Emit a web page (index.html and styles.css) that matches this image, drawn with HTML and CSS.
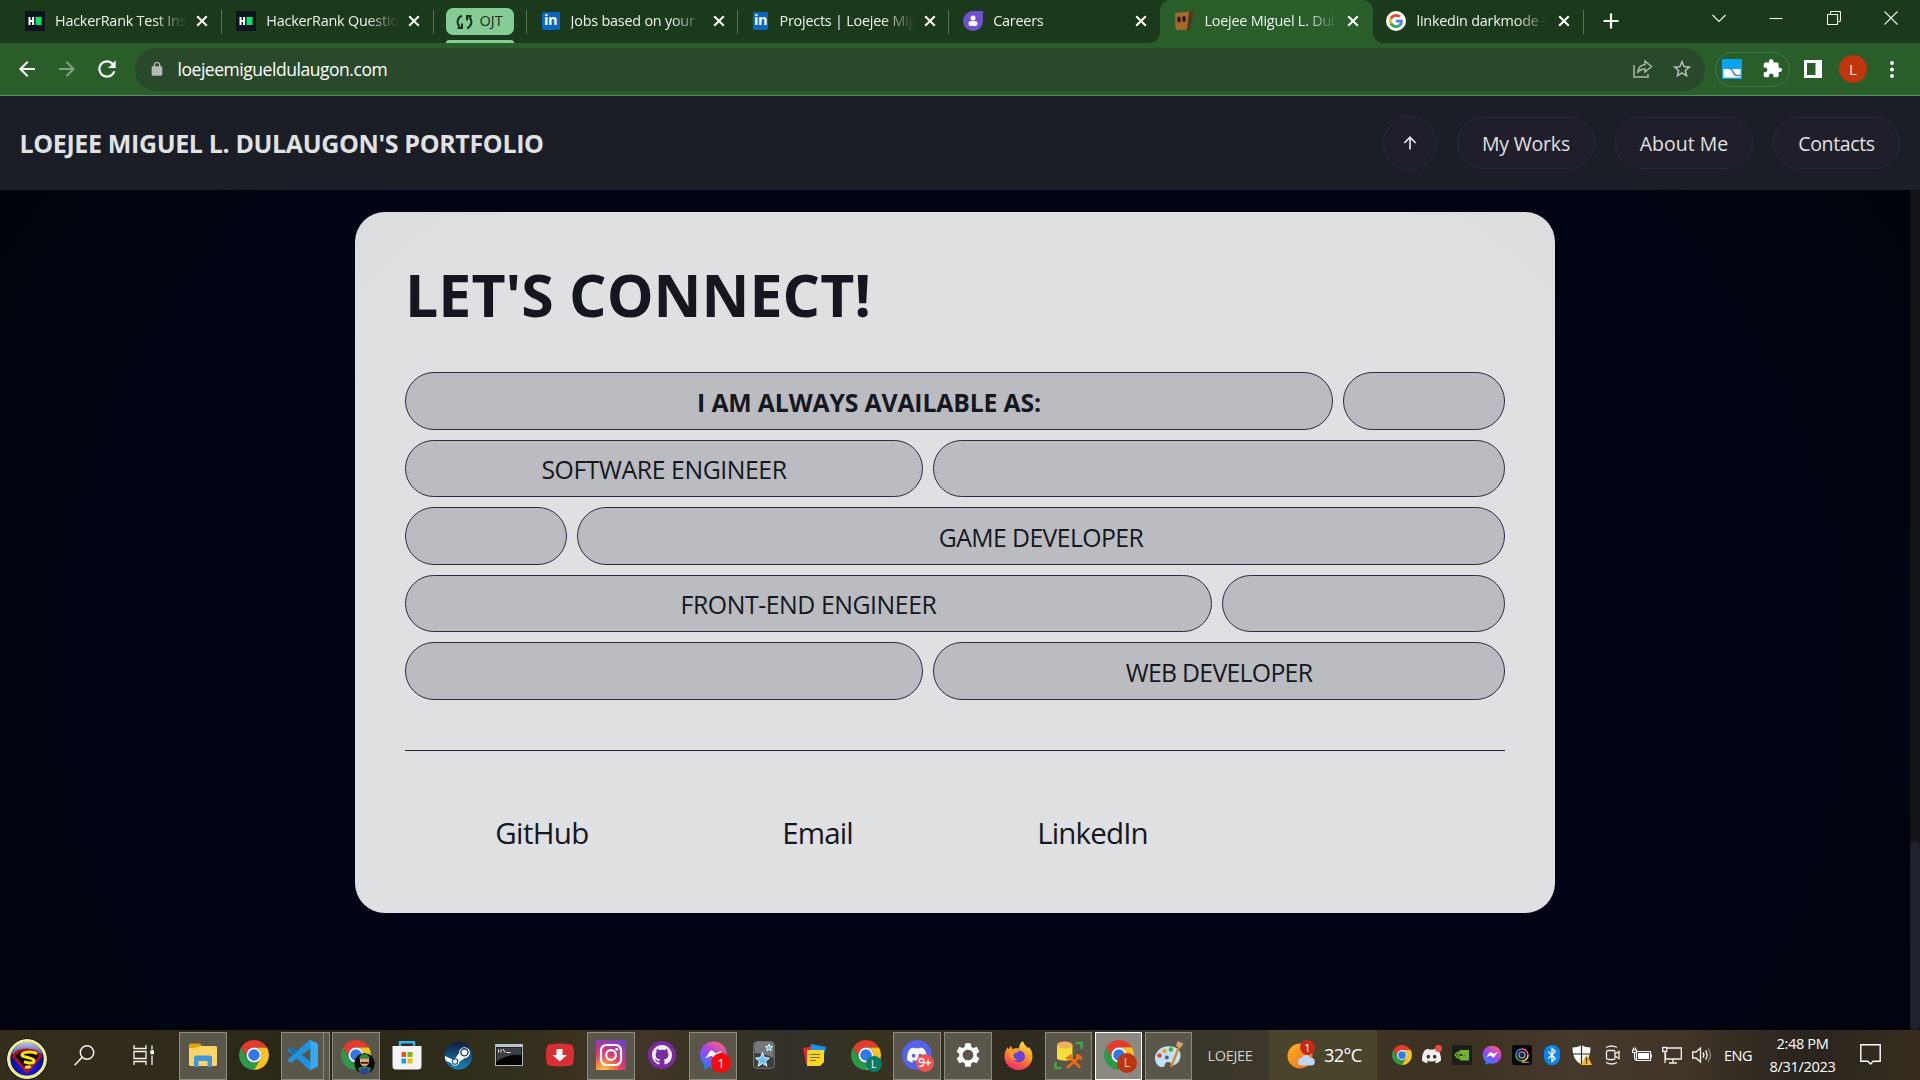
FILE: index.html
```html
<!DOCTYPE html>
<html lang="en">
<head>
<meta charset="utf-8">
<title>Loejee Miguel L. Dulaugon's Portfolio</title>
<link rel="stylesheet" href="styles.css">
</head>
<body>
<svg class="defs" width="0" height="0">
  <symbol id="chrome" viewBox="0 0 48 48">
    <path fill="#e33b2e" d="M24 12h20.78A24 24 0 0 0 3.22 12L13.6 30A12 12 0 0 1 24 12z"/>
    <path fill="#2b9a48" d="M34.4 30L24 48A24 24 0 0 1 3.22 12L13.6 30A12 12 0 0 0 34.4 30z"/>
    <path fill="#fcc31e" d="M34.4 30L24 48A24 24 0 0 0 44.78 12H24A12 12 0 0 1 34.4 30z"/>
    <circle cx="24" cy="24" r="12" fill="#fff"/><circle cx="24" cy="24" r="9.3" fill="#2f78e8"/>
  </symbol>
  <symbol id="close" viewBox="0 0 12 12"><path d="M1.2 1.2l9.6 9.6M10.8 1.2L1.2 10.8" stroke="#fff" stroke-width="2" fill="none"/></symbol>
  <symbol id="hr" viewBox="0 0 20 20"><path fill="#0e141e" d="M0 0h20v20H0z"/><path fill="#fff" d="M3.5 6h2v3h1.6V6h2v8h-2v-3H5.500v3h-2z"/><path fill="#05e866" d="M10.500 6h6v8h-6z"/></symbol>
  <symbol id="discord" viewBox="0 0 24 24"><path d="M20.317 4.3698a19.7913 19.7913 0 00-4.8851-1.5152.0741.0741 0 00-.0785.0371c-.211.3753-.4447.8648-.6083 1.2495-1.8447-.2762-3.68-.2762-5.4868 0-.1636-.3933-.4058-.8742-.6177-1.2495a.077.077 0 00-.0785-.037 19.7363 19.7363 0 00-4.8852 1.515.0699.0699 0 00-.0321.0277C.5334 9.0458-.319 13.5799.0992 18.0578a.0824.0824 0 00.0312.0561c2.0528 1.5076 4.0413 2.4228 5.9929 3.0294a.0777.0777 0 00.0842-.0276c.4616-.6304.8731-1.2952 1.226-1.9942a.076.076 0 00-.0416-.1057c-.6528-.2476-1.2743-.5495-1.8722-.8923a.077.077 0 01-.0076-.1277c.1258-.0943.2517-.1923.3718-.2914a.0743.0743 0 01.0776-.0105c3.9278 1.7933 8.18 1.7933 12.0614 0a.0739.0739 0 01.0785.0095c.1202.099.246.1981.3728.2924a.077.077 0 01-.0066.1276 12.2986 12.2986 0 01-1.873.8914.0766.0766 0 00-.0407.1067c.3604.698.7719 1.3628 1.225 1.9932a.076.076 0 00.0842.0286c1.961-.6067 3.9495-1.5219 6.0023-3.0294a.077.077 0 00.0313-.0552c.5004-5.177-.8382-9.6739-3.5485-13.6604a.061.061 0 00-.0312-.0286zM8.02 15.3312c-1.1825 0-2.1569-1.0857-2.1569-2.419 0-1.3332.9555-2.4189 2.157-2.4189 1.2108 0 2.1757 1.0952 2.1568 2.419 0 1.3332-.9555 2.4189-2.1569 2.4189zm7.9748 0c-1.1825 0-2.1569-1.0857-2.1569-2.419 0-1.3332.9554-2.4189 2.1569-2.4189 1.2108 0 2.1757 1.0952 2.1568 2.419 0 1.3332-.946 2.4189-2.1568 2.4189Z"/></symbol>
  <linearGradient id="msg" x1="0.2" y1="1" x2="0.8" y2="0"><stop offset="0" stop-color="#1a86ff"/><stop offset=".5" stop-color="#a043f5"/><stop offset="1" stop-color="#ff6470"/></linearGradient>
  <symbol id="messenger" viewBox="0 0 30 30"><path fill="url(#msg)" d="M15 1C7 1 1 6.800 1 14.500c0 4 1.700 7.500 4.500 9.900V30l4.800-2.600c1.500.4 3 .6 4.700.6 8 0 14-5.800 14-13.500S23 1 15 1z"/><path fill="#fff" d="M6.500 18.500l4.600-7.200c.7-1 2-1.200 3-.5l3.200 2.500 6.200-2.800-4.600 7.200c-.7 1-2 1.200-3 .5l-3.200-2.500z"/></symbol>
</svg>

<header class="tabstrip">
  <div class="tab hrk"><svg class="fav" width="20" height="20"><use href="#hr"/></svg><span class="label">HackerRank Test Ins</span><svg class="x" width="12" height="12"><use href="#close"/></svg></div>
  <div class="tab hrk"><svg class="fav" width="20" height="20"><use href="#hr"/></svg><span class="label">HackerRank Questio</span><svg class="x" width="12" height="12"><use href="#close"/></svg></div>
  <div class="group"><div class="chip"><svg width="17" height="16" viewBox="0 0 17 16" fill="none" stroke="#17301a" stroke-width="2"><path d="M6 1.800A6.500 6.500 0 0 0 4 13M1.500 14H6V9.500M11 14.200A6.500 6.500 0 0 0 13 3M15.500 2H11v4.500"/></svg><span>OJT</span></div></div>
  <div class="tab li"><span class="fav in">in</span><span class="label">Jobs based on your</span><svg class="x" width="12" height="12"><use href="#close"/></svg></div>
  <div class="tab li"><span class="fav in">in</span><span class="label">Projects | Loejee Mig</span><svg class="x" width="12" height="12"><use href="#close"/></svg></div>
  <div class="tab nosep"><svg class="fav" width="20" height="20" viewBox="0 0 20 20"><path fill="#7150cf" d="M10 0h10v10A10 10 0 1 1 10 0z"/><circle cx="10" cy="7" r="2.500" fill="#fff"/><rect x="5.500" y="10" width="9" height="5" rx="2.500" fill="#fff"/></svg><span class="label">Careers</span><svg class="x" width="12" height="12"><use href="#close"/></svg></div>
  <div class="tab nosep active"><svg class="fav" width="20" height="20" viewBox="0 0 20 20"><path fill="#54341e" d="M14 2l5-2v6l-4 13-2 0z"/><path fill="#a5682d" d="M1 2l14-1.500L13 19l-2 .5-1-1.500-1.500 2L6 18l-1.500 1.500L1.500 18z"/><ellipse cx="5" cy="8.500" rx="1.700" ry="3" fill="#2a1a10"/><ellipse cx="10" cy="8" rx="1.700" ry="3" fill="#2a1a10"/></svg><span class="label">Loejee Miguel L. Dul</span><svg class="x" width="12" height="12"><use href="#close"/></svg></div>
  <div class="tab google"><svg class="fav" width="20" height="20" viewBox="0 0 68 68"><circle cx="34" cy="34" r="34" fill="#fff"/><g transform="translate(10 10)"><path fill="#ea4335" d="M24 9.500c3.540 0 6.710 1.220 9.210 3.600l6.850-6.850C35.900 2.380 30.470 0 24 0 14.620 0 6.510 5.380 2.560 13.220l7.980 6.190C12.430 13.720 17.740 9.500 24 9.500z"/><path fill="#4285f4" d="M46.980 24.550c0-1.570-.15-3.090-.38-4.550H24v9.020h12.940c-.58 2.960-2.260 5.480-4.780 7.180l7.730 6c4.510-4.180 7.090-10.360 7.090-17.650z"/><path fill="#fbbc05" d="M10.530 28.590c-.48-1.450-.76-2.990-.76-4.590s.27-3.140.76-4.590l-7.980-6.190C.92 16.460 0 20.120 0 24c0 3.880.92 7.540 2.560 10.780l7.970-6.190z"/><path fill="#34a853" d="M24 48c6.480 0 11.930-2.130 15.890-5.810l-7.730-6c-2.150 1.450-4.920 2.300-8.160 2.300-6.260 0-11.570-4.220-13.470-9.910l-7.980 6.190C6.510 42.620 14.620 48 24 48z"/></g></svg><span class="label">linkedin darkmode -</span><svg class="x" width="12" height="12"><use href="#close"/></svg></div>
  <svg class="plus" width="16" height="16" viewBox="0 0 16 16"><path d="M8 .5v15M.5 8h15" stroke="#fff" stroke-width="2.200"/></svg>
  <div class="winctl">
    <svg width="14" height="14" viewBox="0 0 14 14"><path d="M.5 4L7 10.500 13.500 4"/></svg>
    <svg width="14" height="14" viewBox="0 0 14 14"><path d="M.5 7.500h13"/></svg>
    <svg width="14" height="14" viewBox="0 0 14 14"><path d="M.5 3.500h10v10H.5zM3.500 3.500v-2q0-1 1-1h8q1 0 1 1v8q0 1-1 1h-2"/></svg>
    <svg width="14" height="14" viewBox="0 0 14 14"><path d="M.5.500l13 13M13.500.500l-13 13"/></svg>
  </div>
</header>

<nav class="toolbar">
  <div class="navbtns">
    <svg width="24" height="24" viewBox="0 0 24 24" fill="#fff"><path d="M20 11H7.830l5.590-5.590L12 4l-8 8 8 8 1.410-1.410L7.830 13H20z"/></svg>
    <svg width="24" height="24" viewBox="0 0 24 24" fill="#82a184"><path d="M4 11h12.170l-5.590-5.590L12 4l8 8-8 8-1.410-1.410L16.170 13H4z"/></svg>
    <svg width="26" height="26" viewBox="0 0 24 24" fill="#fff"><path d="M17.650 6.350C16.200 4.900 14.210 4 12 4c-4.420 0-7.990 3.580-7.990 8s3.570 8 7.990 8c3.730 0 6.840-2.550 7.730-6h-2.080c-.82 2.330-3.040 4-5.650 4-3.310 0-6-2.690-6-6s2.690-6 6-6c1.660 0 3.140.69 4.220 1.780L13 11h7V4l-2.350 2.350z"/></svg>
  </div>
  <div class="omnibox">
    <svg width="16" height="16" viewBox="0 0 24 24" fill="#b4bab6"><path d="M18 8h-1V6c0-2.760-2.240-5-5-5S7 3.240 7 6v2H6c-1.100 0-2 .9-2 2v10c0 1.100.9 2 2 2h12c1.100 0 2-.9 2-2V10c0-1.100-.9-2-2-2zM9 6c0-1.660 1.340-3 3-3s3 1.340 3 3v2H9V6z"/></svg>
    <span class="url">loejeemigueldulaugon.com</span>
    <svg width="20" height="18" viewBox="0 0 20 18" fill="none" stroke="#aab9ab" stroke-width="1.500"><path d="M1 5v12h14v-3M12 1l6.500 5.500L12 12V9C8.500 9 6 10.300 4.500 13 5 8 7.500 5 12 4.500z"/></svg>
    <svg class="star" width="22" height="22" viewBox="0 0 24 24" fill="#b9c4ba"><path d="M22 9.240l-7.190-.62L12 2 9.190 8.630 2 9.240l5.460 4.730L5.820 21 12 17.270 18.180 21l-1.630-7.030L22 9.240zM12 15.400l-3.760 2.270 1-4.280-3.320-2.880 4.380-.38L12 6.100l1.710 4.040 4.380.38-3.320 2.880 1 4.280L12 15.400z"/></svg>
  </div>
  <div class="extpill">
    <svg width="20" height="20" viewBox="0 0 20 20"><rect x=".7" y=".7" width="18.600" height="18.600" fill="#fff" stroke="#0aa0ea" stroke-width="1.400"/><path fill="#04a5f0" d="M0 0h20v10H0z"/><path d="M8 10c4 0 2 6.500 7 6.500h4" fill="none" stroke="#4c87b8" stroke-width="1.600"/></svg>
    <svg width="21" height="21" viewBox="0 0 24 24" fill="#fff"><path d="M20.500 11H19V7c0-1.100-.9-2-2-2h-4V3.500C13 2.120 11.880 1 10.500 1S8 2.120 8 3.500V5H4c-1.100 0-1.990.9-1.990 2v3.800H3.500c1.490 0 2.700 1.210 2.700 2.700s-1.210 2.700-2.700 2.700H2V20c0 1.100.9 2 2 2h3.800v-1.500c0-1.490 1.210-2.700 2.700-2.700 1.490 0 2.700 1.210 2.700 2.700V22H17c1.100 0 2-.9 2-2v-4h1.500c1.380 0 2.500-1.120 2.500-2.500S21.880 11 20.500 11z"/></svg>
  </div>
  <svg class="panel" width="18" height="18" viewBox="0 0 18 18"><path fill="#fff" fill-rule="evenodd" d="M0 0h18v18H0zM3 3v12h8.500V3z"/></svg>
  <span class="avatar">L</span>
  <svg class="dots" width="4" height="17" viewBox="0 0 4 17" fill="#fff"><circle cx="2" cy="2" r="1.900"/><circle cx="2" cy="8.500" r="1.900"/><circle cx="2" cy="15" r="1.900"/></svg>
</nav>

<section class="sitehead">
  <h2 class="brand">LOEJEE MIGUEL L. DULAUGON'S PORTFOLIO</h2>
  <div class="menu">
    <a class="up"><svg width="14" height="14" viewBox="0 0 14 14" fill="none" stroke="#e1e3e6" stroke-width="1.700"><path d="M7 13.500V1.500M1.300 7L7 1.300 12.700 7"/></svg></a>
    <a class="works">My Works</a><a class="about">About Me</a><a class="contacts">Contacts</a>
  </div>
</section>

<main class="page">
  <article class="card">
    <h1>LET'S CONNECT!</h1>
    <div class="rows">
      <div class="row r1"><b>I AM ALWAYS AVAILABLE AS:</b><span></span></div>
      <div class="row r2"><span>SOFTWARE ENGINEER</span><span></span></div>
      <div class="row r3"><span></span><span class="game">GAME DEVELOPER</span></div>
      <div class="row r4"><span>FRONT-END ENGINEER</span><span></span></div>
      <div class="row r2"><span></span><span class="web">WEB DEVELOPER</span></div>
    </div>
    <hr>
    <div class="links"><a class="gh">GitHub</a><a>Email</a><a>LinkedIn</a></div>
  </article>
  <div class="scroll"><i></i></div>
</main>

<footer class="taskbar">
  <div class="start"><svg width="42" height="42" viewBox="0 0 42 42"><defs><radialGradient id="sb" cx=".5" cy=".7" r=".6"><stop offset="0" stop-color="#1a22ff"/><stop offset="1" stop-color="#050a70"/></radialGradient><linearGradient id="sg" x1="0" y1="0" x2="0" y2="1"><stop offset="0" stop-color="#c4c8ea"/><stop offset=".6" stop-color="#7886c8"/><stop offset="1" stop-color="#4a55a8"/></linearGradient></defs><circle cx="21" cy="21" r="20.500" fill="#0a0a0a"/><circle cx="21" cy="21" r="18" fill="url(#sb)" stroke="#f2ef62" stroke-width="2.600"/><circle cx="21" cy="21" r="19.400" fill="none" stroke="#fffff0" stroke-width="1"/><path fill="url(#sg)" d="M5 16C8 8 14 4 21 4s13 4 16 12z"/><path fill="#b3121c" d="M11 12.500q10-4 20 0l5.500 5.500L21 36 5.500 18z"/><path fill="#120808" d="M13 14.500q8-3 17 0l3 3.500-12 14L9 18z"/><path d="M31 15.500c-5-2-14-2-15 1-.8 3.400 12 2.500 12 6.200 0 3-5 3-10 1M19 29c3 .8 4 .2 5.500-1" fill="none" stroke="#ffe51c" stroke-width="3"/></svg></div>
  <div class="glyph search"><svg width="21" height="21" viewBox="0 0 21 21" fill="none" stroke="#f5f5f2" stroke-width="1.500"><circle cx="13" cy="7.500" r="6.700"/><path d="M8.200 12.300L.6 20.200"/></svg></div>
  <div class="glyph view"><svg width="21" height="20" viewBox="0 0 21 20" fill="none" stroke="#f5f5f2" stroke-width="1.300"><path d="M1 0v3.500h12V0M1 20v-3.500h12V20M1 6.500h12v7H1zM19 .5v4M19 10.500V20"/><path fill="#fff" d="M18 6h2.500v2.500H18z"/></svg></div>

  <div class="slot open"><svg width="28" height="24" viewBox="0 0 28 24"><path fill="#e3a008" d="M0 2q0-1.500 1.500-1.500h9.500l2 2.500v6H0z"/><path fill="#fed565" d="M0 5q8 0 11-2h15.500q1.500 0 1.500 1.500v17q0 1.500-1.500 1.500h-25Q0 23 0 21.500z"/><path fill="#3f96dc" d="M5 24V14.500q0-2 2-2h14q2 0 2 2V24h-4.500v-6h-9v6z"/></svg></div>
  <div class="slot"><svg width="30" height="30"><use href="#chrome"/></svg></div>
  <div class="slot open stacked"><svg width="30" height="30" viewBox="0 0 24 24"><path fill="#1f93dd" d="M23.150 2.587L18.210.21a1.494 1.494 0 0 0-1.705.29l-9.460 8.630-4.120-3.128a.999.999 0 0 0-1.276.057L.327 7.261A1 1 0 0 0 .326 8.740L3.899 12 .326 15.260a1 1 0 0 0 .001 1.479L1.650 17.940a.999.999 0 0 0 1.276.057l4.120-3.128 9.460 8.630a1.492 1.492 0 0 0 1.704.29l4.942-2.377A1.500 1.500 0 0 0 24 20.060V3.939a1.500 1.500 0 0 0-.85-1.352zm-5.146 14.861L10.826 12l7.178-5.448v10.896z"/><path fill="#36a9f0" d="M18 .1l5.150 2.487A1.500 1.500 0 0 1 24 3.939V20.060a1.500 1.500 0 0 1-.85 1.350L18 23.900z"/><path fill="#0b75bc" d="M.33 7.260L1.650 6.060a1 1 0 0 1 1.270-.06L7 9.100l-3.100 2.900z"/></svg></div>
  <div class="slot open"><svg width="30" height="30"><use href="#chrome"/></svg><svg class="badge luigi" width="21" height="21" viewBox="0 0 21 21"><circle cx="10.500" cy="10.500" r="10.500" fill="#0b0d0c"/><path fill="#2f8a3a" d="M5 5.500Q6 1 10.500 1T16 5.500z"/><path fill="#e0a483" d="M6 5.500h9v5q-2 3-4.500 3T6 10.500z"/><path fill="#3a2015" d="M6.500 9h8v1.800h-8z"/><path fill="#2f8a3a" d="M4 15q6-3 13 0l-1.500 4h-10z"/><path fill="#2b479e" d="M7 15h7l1.500 5q-5 1-10 0z"/></svg></div>
  <div class="slot"><svg width="30" height="30" viewBox="0 0 30 30"><path d="M8 8V2.200h14V8" fill="none" stroke="#34b4f0" stroke-width="2.400"/><path fill="#f4f4f4" d="M.5 6h29v20q0 3.500-3.500 3.500H4Q.5 29.500.5 26z"/><path fill="#f25022" d="M9.500 12H14v5H9.500z"/><path fill="#7fba00" d="M15.500 12h5v5h-5z"/><path fill="#00a4ef" d="M9.500 18.500H14v5H9.500z"/><path fill="#ffb900" d="M15.500 18.500h5v5h-5z"/></svg></div>
  <div class="slot"><svg width="29" height="29" viewBox="0 0 29 29"><defs><linearGradient id="st" x1="0" y1="0" x2="0" y2="1"><stop offset="0" stop-color="#101a3c"/><stop offset="1" stop-color="#1a84ba"/></linearGradient></defs><circle cx="14.500" cy="14.500" r="14" fill="url(#st)"/><path fill="#fff" d="M.8 15l8 3.400 2.200-.7 4-5.700a5.500 5.500 0 1 1 5.500 5.200L15.300 21a4.200 4.200 0 0 1-8 1.200L1.500 19.500z"/><circle cx="20.400" cy="11.300" r="3.600" fill="#fff" stroke="#1c3c68" stroke-width="1.400"/><circle cx="11" cy="20.600" r="2.700" fill="none" stroke="#1c5c90" stroke-width="1.200"/></svg></div>
  <div class="slot"><svg width="28" height="22" viewBox="0 0 28 22"><rect x=".5" y=".5" width="27" height="21" fill="#050505" stroke="#a9b8bf"/><path fill="#b9c6cc" d="M1 0h26v3H1z"/><path fill="#3d4042" d="M1.500 3.500h25V11C16 10 8 13 1.500 18z"/><path d="M3.500 5.500v3M6 5.500v3M8 5l2 3.500M11.500 8.500h4" stroke="#e8e8e8" stroke-width="1"/></svg></div>
  <div class="slot"><svg width="28" height="24" viewBox="0 0 28 24"><path fill="#d92f34" d="M3 1.500Q14-.5 25 1.500 28 2 28 12t-3 10.500q-11 2-22 0Q0 22 0 12T3 1.500z"/><path fill="#fff" d="M10.500 6h6v6h4.500L13.700 18.500 6.500 12h4z"/></svg></div>
  <div class="slot open"><svg width="30" height="30" viewBox="0 0 30 30"><defs><radialGradient id="ig" cx=".25" cy="1.050" r="1.150"><stop offset="0" stop-color="#ffd060"/><stop offset=".25" stop-color="#fb8a3c"/><stop offset=".55" stop-color="#df3670"/><stop offset="1" stop-color="#7440c8"/></radialGradient></defs><path fill="url(#ig)" d="M0 0h30v30H0z"/><g fill="none" stroke="#fff" stroke-width="2.200"><rect x="5" y="5" width="20" height="20" rx="5.500"/><circle cx="15" cy="15" r="4.900"/></g><circle cx="20.700" cy="9.300" r="1.400" fill="#fff"/></svg></div>
  <div class="slot"><svg width="28" height="28" viewBox="0 0 28 28"><circle cx="14" cy="14" r="14" fill="#7a2ba0"/><path transform="translate(4 4) scale(1.250)" fill="#f5effa" d="M8 0C3.580 0 0 3.580 0 8c0 3.540 2.290 6.530 5.470 7.590.4.070.55-.17.55-.38 0-.19-.01-.82-.01-1.490-2.010.37-2.530-.49-2.690-.94-.09-.23-.48-.94-.82-1.130-.28-.15-.68-.52-.01-.53.63-.01 1.080.58 1.230.82.72 1.210 1.870.87 2.330.66.070-.52.280-.87.510-1.070-1.780-.2-3.640-.89-3.640-3.950 0-.87.310-1.590.82-2.150-.08-.2-.36-1.020.08-2.120 0 0 .67-.21 2.200.82.640-.18 1.320-.27 2-.27s1.360.09 2 .27c1.530-1.040 2.200-.82 2.200-.82.440 1.100.160 1.920.080 2.120.510.560.820 1.270.820 2.150 0 3.070-1.870 3.750-3.650 3.950.290.250.540.730.540 1.480 0 1.070-.01 1.930-.01 2.200 0 .21.150.46.550.38A8.010 8.010 0 0 0 16 8c0-4.420-3.580-8-8-8z"/></svg></div>
  <div class="slot open"><svg width="29" height="30"><use href="#messenger"/></svg><span class="badge one">1</span></div>
  <div class="slot"><svg width="22" height="28" viewBox="0 0 22 28"><rect x=".7" y=".7" width="20.600" height="26.600" rx="3" fill="#3b3d3e" stroke="#77797a"/><path fill="#767879" d="M1.500 4q0-3 3-3h13q3 0 3 3v13Q12 12 1.500 12z"/><path fill="#6ebdf0" stroke="#e6f5ff" stroke-width="1" d="M9.500 11.500l2 5 5 .6-3.900 3.200 1.300 4.900-4.400-2.700-4.400 2.700 1.300-4.900-3.900-3.200 5-.6zM16 3l1 2.400 2.500.2-1.900 1.600.6 2.500L16 8.400l-2.200 1.300.6-2.500-1.900-1.600 2.500-.2z"/></svg></div>
  <div class="slot"><svg width="24" height="24" viewBox="0 0 24 24"><path fill="#e5262c" d="M0 5l14-3 4 16L3 21z"/><path fill="#1593f2" d="M8 1l15 3-4 17H6z"/><path fill="#fcd620" d="M4 7h17v12l-4 4H4z"/><path d="M7 11.500h10M7 14.500h10M7 17.500h6" stroke="#7c6a10" stroke-width="1.200"/></svg></div>
  <div class="slot"><svg width="30" height="30"><use href="#chrome"/></svg><span class="badge teal">L</span></div>
  <div class="slot open"><svg width="30" height="30" viewBox="0 0 30 30"><circle cx="15" cy="15" r="15" fill="#5562ea"/><svg x="5" y="5" width="20" height="20" viewBox="0 0 24 24" fill="#fff"><use href="#discord"/></svg></svg><span class="badge nine">9+</span></div>
  <div class="slot open"><svg width="28" height="28" viewBox="0 0 24 24" fill="#fff"><path d="M19.430 12.980c.04-.32.07-.64.07-.98s-.03-.66-.07-.98l2.110-1.650c.19-.15.24-.42.12-.64l-2-3.460c-.12-.22-.39-.3-.61-.22l-2.490 1c-.52-.4-1.080-.73-1.690-.98l-.38-2.650C14.460 2.180 14.250 2 14 2h-4c-.25 0-.46.18-.49.42l-.38 2.650c-.61.25-1.170.59-1.690.98l-2.490-1c-.23-.09-.49 0-.61.22l-2 3.460c-.13.22-.07.49.12.64l2.110 1.650c-.04.32-.07.65-.07.98s.03.66.07.98l-2.110 1.650c-.19.15-.24.42-.12.64l2 3.460c.12.22.39.3.61.22l2.490-1c.52.4 1.080.73 1.690.98l.38 2.650c.03.24.24.42.49.42h4c.25 0 .46-.18.49-.42l.38-2.650c.61-.25 1.170-.59 1.690-.98l2.490 1c.23.09.49 0 .61-.22l2-3.460c.12-.22.07-.49-.12-.64l-2.110-1.650zM12 16.600c-2.540 0-4.600-2.060-4.600-4.600s2.060-4.600 4.600-4.600 4.600 2.060 4.600 4.600-2.060 4.600-4.600 4.600z"/></svg></div>
  <div class="slot narrow"><svg width="29" height="29" viewBox="0 0 29 29"><defs><linearGradient id="ff" x1=".7" y1="0" x2=".3" y2="1"><stop offset="0" stop-color="#ffe63a"/><stop offset=".5" stop-color="#ff8a26"/><stop offset="1" stop-color="#f5246a"/></linearGradient></defs><path fill="url(#ff)" d="M14.500 29C6.500 29 .5 23 .5 15.500c0-4 1.500-7.500 3.500-9.500l.5 2.500L7 4.500l1 3.500c3-1 5-1 7-.5 0-3 1-5.500 4-7.500.5 3 3 5 5 7l1-1c2.500 3 3.500 6 3.500 9.500C28.500 23 22.500 29 14.500 29z"/><circle cx="15" cy="15.500" r="6" fill="#6a43d6"/><path fill="#ff9a2a" d="M5 10c4-2.500 8-2 10 1-3 0-4 1.500-6 2.500 0 3 2 5 5 5-5 2-9-1-9-8.500z"/></svg></div>
  <div class="slot open narrow"><svg width="29" height="29" viewBox="0 0 29 29"><path d="M21.500 2h6v6M7.500 27h-6v-6" fill="none" stroke="#46a342" stroke-width="2.600"/><path fill="#f7dd38" d="M3 4v14q8 3.500 15.500 0V4z"/><ellipse cx="10.700" cy="4" rx="7.800" ry="3.500" fill="#eeb25a"/><path d="M13 27l12-11M15 15.500l11 11M12.500 18l5-4M22 14.500q4 0 5.500 4" stroke="#ec6c0c" stroke-width="2.800" fill="none"/></svg></div>
  <div class="slot open narrow current"><svg width="30" height="30"><use href="#chrome"/></svg><span class="badge red">L</span></div>
  <div class="slot open narrow"><svg width="30" height="28" viewBox="0 0 30 28"><path fill="#bfe3f5" d="M12 5.500C5 6.500 1 12 1 17c0 6 4 9.500 8 9 3-.5 1-4.500 4.500-5 4-.5 4 4 7 3 4-1.500 6.500-6 6-11-.5-5-6-8.500-14.500-7.500z"/><circle cx="5.500" cy="14.500" r="2.300" fill="#e6423c"/><circle cx="10.500" cy="10" r="2.300" fill="#f2a41c"/><circle cx="17" cy="8.500" r="2.200" fill="#44ac45"/><circle cx="12.800" cy="16.500" r="1.900" fill="#45616e"/><path d="M25.500 5L17 26" stroke="#e2832a" stroke-width="2.300"/><path fill="#d3a271" d="M22 5l1.500-5 6 2.500-3 4.500z"/></svg></div>

  <div class="desk">LOEJEE</div>
  <div class="weather"><svg width="29" height="29" viewBox="0 0 29 29"><defs><linearGradient id="sun" x1="0" y1="0" x2="1" y2="1"><stop offset="0" stop-color="#fbb325"/><stop offset="1" stop-color="#f06d15"/></linearGradient></defs><circle cx="13" cy="15" r="12.500" fill="url(#sun)"/><path fill="#bcd5f8" d="M14 24.500a3.800 3.800 0 0 1 .5-7.500 5 5 0 0 1 9-.3 4 4 0 0 1 1.500 7.800z"/></svg><span class="badge alert">1</span><span class="temp">32°C</span></div>

  <div class="tray">
    <svg width="20" height="20"><use href="#chrome"/></svg>
    <svg width="20" height="20" viewBox="0 0 20 20"><svg x="0" y="1.500" width="19" height="19" viewBox="0 0 24 24" fill="#f0f0f0"><use href="#discord"/></svg><circle cx="16.500" cy="3.500" r="3.500" fill="#f0484a"/></svg>
    <svg width="20" height="20" viewBox="0 0 20 20"><path fill="#1b1e1d" d="M0 0h20v20H0z"/><path fill="#74b62e" d="M8 5h9v10.500H8z"/><path fill="#1b1e1d" d="M8 7c3 0 5 1 6.500 3-1.500 2-3.500 3.500-6.500 3.500z"/><path d="M3 10q5-6.500 11.500 0Q8 16.500 3 10zM6 10q3-3.500 6 0-3 3.500-6 0z" fill="none" stroke="#74b62e" stroke-width="1.300"/></svg>
    <svg width="20" height="20"><use href="#messenger"/></svg>
    <svg width="20" height="20" viewBox="0 0 20 20"><rect width="20" height="20" rx="3" fill="#050505"/><g fill="none" stroke-width="1.600"><path stroke="#f2559c" d="M10 4a6 6 0 0 1 6 6"/><path stroke="#f0d04a" d="M16 10a6 6 0 0 1-6 6"/><path stroke="#40b65c" d="M10 16a6 6 0 0 1-6-6"/><path stroke="#4a86f0" d="M4 10a6 6 0 0 1 6-6"/></g><circle cx="10" cy="10" r="3.800" fill="#8f96c4"/><circle cx="10" cy="10" r="2.400" fill="#20243c"/><path d="M10 17.300h7" stroke="#ddd" stroke-width=".8"/></svg>
    <svg width="20" height="20" viewBox="0 0 20 20"><rect x="2" width="16" height="20" rx="7.500" fill="#0a84f5"/><path d="M6.300 6.500l7 7L10 16.500v-13l3.300 3-7 7" fill="none" stroke="#fff" stroke-width="1.300"/></svg>
    <svg width="20" height="20" viewBox="0 0 20 20"><path fill="#fff" d="M9.500 0Q13 2.500 18.500 2.500 19 15 9.500 19.500 0 15 .5 2.500 6 2.500 9.500 0z"/><path d="M9.500 0v19M0 9h19" stroke="#2a2418" stroke-width="1.200"/><path fill="#fdb913" d="M14.500 9L20 20H9z"/><path d="M14.500 12.500v4M14.500 17.500v1.200" stroke="#222" stroke-width="1.300"/></svg>
    <svg width="20" height="20" viewBox="0 0 20 20" fill="none" stroke="#eee" stroke-width="1.300"><rect x="4.500" y="5.500" width="8.500" height="9" rx="1.500"/><path d="M13 9l4-2.500v7L13 11M4 2.500Q9.500-.5 15 2.500M4 17.500q5.500 3 11 0"/></svg>
    <svg width="20" height="20" viewBox="0 0 20 20"><path d="M4.500 6.500h14v9h-14zM19.500 9.500v3M2.500 7v5q0 3 2 3M.5 5h4v2.500h-4zM1.500 2.500V5M3.500 2.500V5" fill="none" stroke="#f2f2f2" stroke-width="1.200"/><path fill="#fff" d="M6 8h11v6H6z"/></svg>
    <svg width="20" height="20" viewBox="0 0 20 20" fill="none" stroke="#f0f0f0" stroke-width="1.300"><path d="M5 3h14.300v11H3.500V8M11 14v4M7 18h8M.7 2.500h4V6.500h-4zM3 6.500V18"/></svg>
    <svg width="20" height="20" viewBox="0 0 20 20" fill="none" stroke="#f2f2f2" stroke-width="1.300"><path d="M.7 7H4l4.500-4v14L4 13H.7z"/><path d="M11 7.500q1.800 2.500 0 5M13.500 5.500q3.200 4.500 0 9"/><path stroke="#8b857a" d="M16 3.500q5 6.500 0 13"/></svg>
  </div>
  <div class="lang">ENG</div>
  <div class="clock"><span>2:48 PM</span><span>8/31/2023</span></div>
  <svg class="note" width="21" height="21" viewBox="0 0 21 21" fill="none" stroke="#fff" stroke-width="1.400"><path d="M.8.800h19.400v16.500h-7L10.500 20l-2.700-2.700h-7z"/></svg>
</footer>
</body>
</html>
```
FILE: styles.css
```css
* { box-sizing: border-box; }
html, body { margin: 0; width: 1920px; height: 1080px; overflow: hidden; }
body { font-family: "Open Sans", "Noto Sans", sans-serif; display: flex; flex-direction: column; background: #010414; }
.defs { position: absolute; }
svg { flex: none; display: block; }
h1, h2 { margin: 0; }

/* tab strip */
.tabstrip { height: 43px; background: #1b391b; display: flex; padding-left: 11px; flex: none; }
.tab { width: 211.3px; flex: none; display: flex; align-items: center; padding: 0 14px 1px; position: relative; }
.tab::after { content: ""; position: absolute; right: 0; top: 10px; width: 1px; height: 24px; background: #587459; }
.tab.nosep::after { display: none; }
.tab.hrk { padding-right: 15px; }
.tab.li { padding-left: 15px; }
.fav { margin-right: 10px; }
.li .fav { margin-right: 11px; }
.in { width: 18px; height: 18px; border-radius: 1.500px; background: #0a66c2; color: #fff; font-weight: 700; font-size: 14.500px; line-height: 16px; letter-spacing: -.3px; text-align: center; }
.label { flex: 1; white-space: nowrap; font-size: 14.4px; letter-spacing: -.22px; color: #eef3ee; margin-right: 8px; margin-top: -1px; mask-image: linear-gradient(90deg, #000 calc(100% - 34px), transparent calc(100% - 1px)); }
.x { margin-right: -1px; }
.tab.active { background: #295e2b; border-radius: 10px 10px 0 0; width: 213px; padding-right: 15px; }
.tab.active::before { content: ""; position: absolute; left: -10px; right: -10px; bottom: 0; height: 10px; background: radial-gradient(circle at 0 0, transparent 9.500px, #295e2b 10px) left/10px 10px no-repeat, radial-gradient(circle at 100% 0, transparent 9.500px, #295e2b 10px) right/10px 10px no-repeat; }
.tab.google { width: 210.500px; padding-left: 13px; padding-right: 15px; }
.group { width: 93px; flex: none; padding: 8px 13px 0 12px; position: relative; }
.group::after { content: ""; position: absolute; right: 0; top: 10px; width: 1px; height: 24px; background: #587459; }
.group::before { content: ""; position: absolute; left: 12px; width: 68px; bottom: 0; height: 3px; border-radius: 3px 3px 0 0; background: #84cb95; }
.chip { height: 27px; border-radius: 7px; background: #84cb95; color: #17301a; font-size: 14.5px; display: flex; align-items: center; gap: 7px; padding-left: 10px; }
.chip span { margin-top: -2px; }
.plus { margin: 13px 0 0 19.500px; }
.winctl { margin-left: auto; display: flex; gap: 43.500px; padding: 11px 22px 0 0; fill: none; stroke: #f0f5f0; stroke-width: 1.100; }

/* toolbar */
.toolbar { height: 53px; background: #295e2b; border-bottom: 1px solid #5e8a60; display: flex; align-items: center; flex: none; padding: 0 26px 0 15px; }
.navbtns { display: flex; align-items: center; gap: 16px; width: 120px; }
.navbtns svg:last-child { margin-left: -1px; }
.omnibox { width: 1570px; height: 43px; border-radius: 22px; background: #28492a; display: flex; align-items: center; padding: 0 12px 0 14px; }
.url { font-size: 17.500px; letter-spacing: -.46px; color: #fff; flex: 1; margin: 0 0 0 12.500px; }
.star { margin-left: 18px; }
.extpill { margin-left: 10px; width: 75px; height: 35px; border: 1px solid #47774a; border-radius: 18px; display: flex; align-items: center; justify-content: space-between; padding: 0 6px 1px 6px; }
.panel { margin-left: 14px; }
.avatar { margin-left: 17px; width: 28px; height: 28px; border-radius: 50%; background: #bf360c; color: #f3dfd8; font-size: 15px; line-height: 28px; text-align: center; }
.dots { margin-left: 23px; }

/* site header */
.sitehead { height: 94px; flex: none; background: #1b1e27; display: flex; align-items: center; justify-content: space-between; padding: 0 20px 0 19.500px; }
.brand { font-size: 25px; letter-spacing: -.36px; color: #e0e2e4; white-space: nowrap; margin-top: -1px; }
.menu { display: flex; align-items: center; gap: 20px; font-size: 19.500px; letter-spacing: -.2px; color: #e0e2e4; }
.menu a { height: 52px; border: 1px solid #2a2b3e; background: #1f1e2a; border-radius: 26px; display: flex; align-items: center; justify-content: center; }
.menu .up { width: 54px; height: 54px; border-radius: 50%; }
.works, .about { width: 138px; }
.menu .about { letter-spacing: 0; }
.contacts { width: 127px; letter-spacing: -.35px; }

/* page */
.page { height: 840px; flex: none; position: relative; padding: 22px 0 0 355px; background: radial-gradient(ellipse 1250px 1050px at 955px 480px, #010415 60%, #010410 75%, #000207 100%); }
.card { width: 1200px; height: 701px; border-radius: 30px; padding: 50px; color: #15171e; background: radial-gradient(ellipse 850px 640px at 600px 420px, #dfe0e2 80%, #d8d9db 110%); display: flex; flex-direction: column; }
h1 { font-size: 59px; letter-spacing: 0; line-height: 68px; margin: -2px 0 44px; white-space: nowrap; }
.rows { display: grid; gap: 10px; grid-auto-rows: 57.500px; }
.row { display: grid; gap: 10px; font-size: 24.800px; letter-spacing: -.42px; }
.row > * { border: 1.500px solid #2b2b42; background: #bbbcc1; border-radius: 29px; display: flex; align-items: center; justify-content: center; padding-top: 2px; }
.row b { letter-spacing: -.16px; padding-top: 3px; }
.r1 { grid-template-columns: 928px 1fr; }
.r2 { grid-template-columns: 518px 1fr; }
.r3 { grid-template-columns: 162px 1fr; }
.r4 { grid-template-columns: 807px 1fr; }
.row .game { letter-spacing: -.6px; padding-top: 3px; }
.row .web { letter-spacing: -.7px; padding-top: 3px; }
hr { margin: 50px 0 0; border: 0; height: 1px; width: 100%; background: #25263c; flex: none; }
.links { display: grid; grid-template-columns: repeat(4, 275px); margin-top: 60px; font-size: 29.500px; letter-spacing: -.85px; line-height: 44px; text-align: center; }
.gh { letter-spacing: -.65px; margin-left: -1px; }
.scroll { position: absolute; right: 0; top: 0; width: 10px; height: 100%; background: #131317; }
.scroll i { position: absolute; bottom: 0; width: 10px; height: 189px; border-radius: 5px; background: #1f212d; }

/* taskbar */
.taskbar { height: 50px; flex: none; display: flex; align-items: center; color: #fff; background: linear-gradient(90deg, #352e1c 0, #302b1a 8%, #292619 17%, #33301c 27%, #3d3220 31%, #403528 34%, #37321d 37%, #33302a 41%, #373320 46%, #2f2a1e 53%, #37342a 59%, #3c3729 66%, #3d3121 76%, #44392b 82%, #3f3427 88%, #29241e 94%, #372e1e 100%); }
.start { width: 42px; margin: 7px 0 0 6px; height: 42px; }
.glyph { height: 21px; }
.search { margin-left: 26px; }
.view { margin: 0 23.500px 0 38px; }
.slot { width: 51px; height: 48px; flex: none; display: flex; align-items: center; justify-content: center; position: relative; isolation: isolate; margin-top: 1px; }
.slot > svg:first-child { margin-top: -1px; }
.slot.narrow { width: 50px; }
.slot.open::before { content: ""; position: absolute; inset: 0 1.500px; border: 1px solid #8e8b81; background: #5a574a; z-index: -1; }
.slot.stacked::before { right: 6.500px; }
.slot.stacked::after { content: ""; position: absolute; right: 1px; top: 0; width: 4.500px; height: 48px; border: 1px solid #8e8b81; background: #5a574a; }
.slot.stacked > svg { margin-left: -4px; }
.slot.current::before { background: #8b8982; border-color: #fff; }
.badge { position: absolute; left: 23.500px; top: 21px; width: 20px; height: 20px; border-radius: 50%; text-align: center; line-height: 20px; font-size: 12px; }
.luigi { width: 21px; height: 21px; top: 21px; }
.one { background: #f60a0a; font-size: 13.500px; }
.teal { background: #0a7a69; width: 16px; height: 16px; line-height: 16px; font-size: 10px; left: 25px; top: 24px; }
.nine { background: #ee5254; width: 18px; height: 18px; line-height: 18px; left: 24px; top: 22px; font-weight: 600; font-size: 12.500px; letter-spacing: -.6px; }
.red { background: #bd350f; color: #f5cfc2; }
.desk { width: 75.500px; padding-left: 14px; font-size: 14.500px; letter-spacing: -.3px; color: #d4d1ca; }
.weather { width: 108px; height: 50px; background: #4a442d; display: flex; align-items: center; padding-left: 18px; position: relative; }
.alert { left: 31px; top: 10px; width: 15px; height: 15px; line-height: 15px; background: #c42b1c; font-size: 11px; }
.temp { font-size: 18.200px; letter-spacing: -.6px; margin-left: 8px; }
.tray { display: flex; gap: 10px; margin-left: 15px; }
.lang { margin-left: 12px; width: 40px; font-size: 14.500px; letter-spacing: -.45px; }
.clock { width: 77px; display: flex; flex-direction: column; align-items: center; font-size: 14.600px; letter-spacing: -.35px; line-height: 23px; }
.note { margin-left: 19px; margin-top: -1px; }
```
